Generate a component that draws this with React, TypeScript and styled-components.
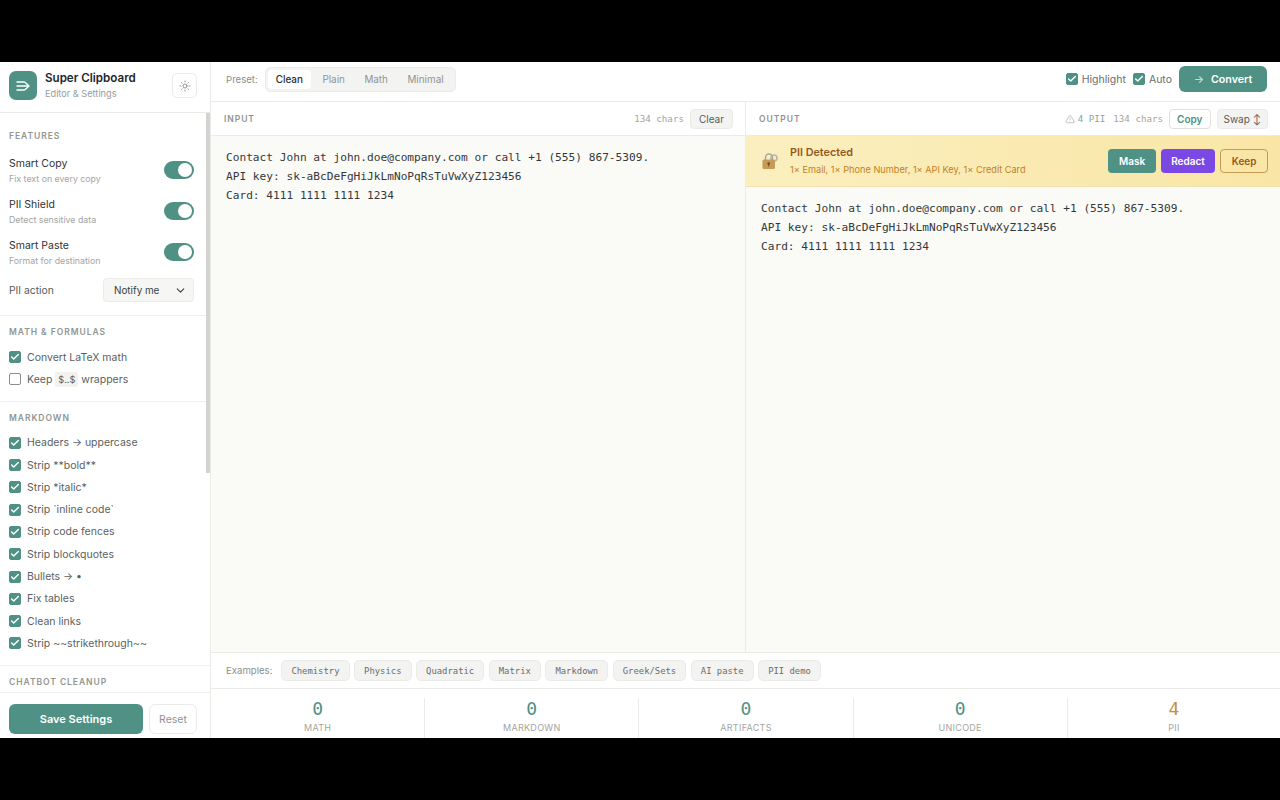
import React from 'react'
import styled, { createGlobalStyle } from 'styled-components'
import { ChevronDown, Sun, TriangleAlert, Check } from 'lucide-react'

const Global = createGlobalStyle`
  html, body { margin: 0; padding: 0; background: #000; }
  * { box-sizing: border-box; }
  body { font-family: Inter, "Liberation Sans", sans-serif; }
`

const sans = `Inter, "Liberation Sans", sans-serif`
const mono = `"DejaVu Sans Mono", "Liberation Mono", monospace`
const teal = '#4f9184'

const markdownOptions = [
  'Headers → uppercase',
  'Strip **bold**',
  'Strip *italic*',
  'Strip `inline code`',
  'Strip code fences',
  'Strip blockquotes',
  'Bullets → •',
  'Fix tables',
  'Clean links',
  'Strip ~~strikethrough~~',
]
const features = [
  { title: 'Smart Copy', sub: 'Fix text on every copy' },
  { title: 'PII Shield', sub: 'Detect sensitive data' },
  { title: 'Smart Paste', sub: 'Format for destination' },
]
const examples = ['Chemistry', 'Physics', 'Quadratic', 'Matrix', 'Markdown', 'Greek/Sets', 'AI paste', 'PII demo']
const stats = [
  { value: 0, label: 'MATH' },
  { value: 0, label: 'MARKDOWN' },
  { value: 0, label: 'ARTIFACTS' },
  { value: 0, label: 'UNICODE' },
  { value: 4, label: 'PII', warn: true },
]

const sample = `Contact John at john.doe@company.com or call +1 (555) 867-5309.
API key: sk-aBcDeFgHiJkLmNoPqRsTuVwXyZ123456
Card: 4111 1111 1111 1234`

const Box = ({ on = true, }: { on?: boolean }) => (
  <CheckBox $on={on}>{on ? <Check size={10} strokeWidth={3.5} color="#fff" /> : null}</CheckBox>
)

export default function App() {
  return (
    <Page>
      <Global />
      <Frame>
        <Sidebar>
          <SideHead>
            <Logo>
              <svg width="14" height="10" viewBox="0 0 14 10" fill="none" stroke="#fff" strokeWidth="1.4" strokeLinecap="round" strokeLinejoin="round">
                <path d="M1 1h7.5M1 5h11.5M1 9h7.5M9.5 1.8L13 5 9.5 8.2" />
              </svg>
            </Logo>
            <Brand>
              <BrandName>Super Clipboard</BrandName>
              <BrandSub>Editor &amp; Settings</BrandSub>
            </Brand>
            <ThemeButton><Sun size={12} strokeWidth={1.4} /></ThemeButton>
          </SideHead>
          <SideScroll>
            <Section $pad={17} $tail={13}>
              <SectionTitle>FEATURES</SectionTitle>
              <FeatureList>
                {features.map((f) => (
                  <Feature key={f.title}>
                    <div>
                      <FeatureTitle>{f.title}</FeatureTitle>
                      <FeatureSub>{f.sub}</FeatureSub>
                    </div>
                    <Toggle />
                  </Feature>
                ))}
              </FeatureList>
              <ActionRow>
                <ActionLabel>PII action</ActionLabel>
                <Select>Notify me<ChevronDown size={13} strokeWidth={2} /></Select>
              </ActionRow>
            </Section>
            <Section $pad={10} $tail={10}>
              <SectionTitle>MATH &amp; FORMULAS</SectionTitle>
              <OptionList $top={8}>
                <Option><Box />Convert LaTeX math</Option>
                <Option><Box on={false} /><span>Keep <Code>$..$</Code> wrappers</span></Option>
              </OptionList>
            </Section>
            <Section $pad={10} $tail={10}>
              <SectionTitle>MARKDOWN</SectionTitle>
              <OptionList $top={8}>
                {markdownOptions.map((o) => (
                  <Option key={o}><Box />{o}</Option>
                ))}
              </OptionList>
            </Section>
            <Section $pad={10}>
              <SectionTitle>CHATBOT CLEANUP</SectionTitle>
            </Section>
            <Thumb />
          </SideScroll>
          <SideFoot>
            <SaveButton>Save Settings</SaveButton>
            <ResetButton>Reset</ResetButton>
          </SideFoot>
        </Sidebar>
        <Main>
          <TopBar>
            <PresetLabel>Preset:</PresetLabel>
            <PresetGroup>
              <PresetItem $active>Clean</PresetItem>
              <PresetItem>Plain</PresetItem>
              <PresetItem>Math</PresetItem>
              <PresetItem>Minimal</PresetItem>
            </PresetGroup>
            <TopRight>
              <TopCheck><Box />Highlight</TopCheck>
              <TopCheck><Box />Auto</TopCheck>
              <ConvertButton><span>→</span>Convert</ConvertButton>
            </TopRight>
          </TopBar>
          <Panels>
            <Panel>
              <PanelHead>
                <PanelTitle>INPUT</PanelTitle>
                <PanelTools>
                  <CharCount>134 chars</CharCount>
                  <GreyButton>Clear</GreyButton>
                </PanelTools>
              </PanelHead>
              <TextArea>{sample}</TextArea>
            </Panel>
            <Panel>
              <PanelHead>
                <PanelTitle>OUTPUT</PanelTitle>
                <PanelTools>
                  <PiiCount><TriangleAlert size={10} strokeWidth={1.5} />4 PII</PiiCount>
                  <CharCount>134 chars</CharCount>
                  <CopyButton>Copy</CopyButton>
                  <SwapButton>Swap ↕</SwapButton>
                </PanelTools>
              </PanelHead>
              <Banner>
                <LockIcon viewBox="0 0 18 18" width="18" height="18">
                  <circle cx="13" cy="6" r="3" fill="none" stroke="#b9b7ae" strokeWidth="1.7" />
                  <path d="M11 8l-3 4" stroke="#b9b7ae" strokeWidth="1.7" />
                  <path d="M4.5 8V5.5a3.5 3.5 0 0 1 7 0V8" fill="none" stroke="#a8a69c" strokeWidth="1.5" />
                  <rect x="1.5" y="7.5" width="12.5" height="9.5" rx="1.5" fill="#c89a58" />
                  <circle cx="7.7" cy="11.5" r="1.3" fill="#6e4e22" />
                  <rect x="7.2" y="11.5" width="1" height="3" fill="#6e4e22" />
                </LockIcon>
                <BannerText>
                  <BannerTitle>PII Detected</BannerTitle>
                  <BannerSub>1× Email, 1× Phone Number, 1× API Key, 1× Credit Card</BannerSub>
                </BannerText>
                <BannerActions>
                  <ActionButton $bg={teal}>Mask</ActionButton>
                  <ActionButton $bg="#7c48e4">Redact</ActionButton>
                  <KeepButton>Keep</KeepButton>
                </BannerActions>
              </Banner>
              <TextArea>{sample}</TextArea>
            </Panel>
          </Panels>
          <ExampleBar>
            <ExampleLabel>Examples:</ExampleLabel>
            {examples.map((e) => <Chip key={e}>{e}</Chip>)}
          </ExampleBar>
          <StatBar>
            {stats.map((s) => (
              <Stat key={s.label}>
                <StatValue $warn={s.warn}>{s.value}</StatValue>
                <StatLabel>{s.label}</StatLabel>
              </Stat>
            ))}
          </StatBar>
        </Main>
      </Frame>
    </Page>
  )
}

const Page = styled.div`
  width: 1280px;
  height: 800px;
  padding-top: 62px;
  overflow: hidden;
  background: #000;
`
const Frame = styled.div`
  width: 1280px;
  height: 676px;
  display: flex;
  background: #fff;
  font-family: ${sans};
  overflow: hidden;
`
const Sidebar = styled.aside`
  width: 211px;
  flex-shrink: 0;
  display: flex;
  flex-direction: column;
  border-right: 1px solid #ebebe8;
`
const SideHead = styled.div`
  height: 51px;
  flex-shrink: 0;
  display: flex;
  align-items: center;
  padding: 0 13px 3px 9px;
  gap: 8px;
  border-bottom: 1px solid #ebebe8;
`
const Logo = styled.div`
  width: 28px;
  height: 29px;
  border-radius: 7px;
  background: ${teal};
  display: flex;
  align-items: center;
  justify-content: center;
`
const Brand = styled.div`
  flex: 1;
  display: flex;
  flex-direction: column;
  gap: 2px;
`
const BrandName = styled.div`
  font-size: 11.6px;
  font-weight: 600;
  line-height: 15px;
  color: #22262a;
`
const BrandSub = styled.div`
  font-size: 9.2px;
  line-height: 12px;
  color: #999c9a;
`
const ThemeButton = styled.div`
  width: 25px;
  height: 25px;
  border: 1px solid #ebebe8;
  border-radius: 5px;
  display: flex;
  align-items: center;
  justify-content: center;
  color: #6c6f6d;
`
const SideScroll = styled.div`
  flex: 1;
  min-height: 0;
  overflow: hidden;
  position: relative;
`
const Thumb = styled.div`
  position: absolute;
  top: 0;
  right: 0;
  width: 4px;
  height: 360px;
  background: #d3d3d0;
`
const Section = styled.section<{ $pad: number; $tail?: number }>`
  padding: ${(p) => p.$pad}px 16px ${(p) => p.$tail ?? 12}px 9px;
  border-bottom: 1px solid #efefec;
`
const SectionTitle = styled.div`
  font-size: 8.5px;
  font-weight: 600;
  letter-spacing: 0.95px;
  line-height: 12px;
  color: #929592;
`
const FeatureList = styled.div`
  margin-top: 13px;
  display: flex;
  flex-direction: column;
  gap: 11px;
`
const Feature = styled.div`
  display: flex;
  align-items: center;
  justify-content: space-between;
  height: 30px;
`
const FeatureTitle = styled.div`
  font-size: 10.5px;
  font-weight: 400;
  line-height: 15px;
  color: #2f3335;
`
const FeatureSub = styled.div`
  font-size: 8.8px;
  line-height: 13px;
  margin-top: 1px;
  color: #a3a5a3;
`
const Toggle = styled.div`
  width: 30px;
  height: 18px;
  border-radius: 9px;
  background: ${teal};
  position: relative;
  &::after {
    content: '';
    position: absolute;
    top: 2px;
    right: 2px;
    width: 14px;
    height: 14px;
    border-radius: 50%;
    background: #fff;
  }
`
const ActionRow = styled.div`
  margin-top: 11px;
  display: flex;
  align-items: center;
  justify-content: space-between;
`
const ActionLabel = styled.div`
  font-size: 10.3px;
  color: #55595a;
`
const Select = styled.div`
  width: 91px;
  height: 24px;
  border: 1px solid #ebebe8;
  border-radius: 4px;
  background: #f6f6f4;
  display: flex;
  align-items: center;
  justify-content: space-between;
  padding: 0 6px 0 10px;
  font-size: 9.9px;
  color: #3b3f40;
`
const OptionList = styled.div<{ $top: number }>`
  margin-top: ${(p) => p.$top}px;
  display: flex;
  flex-direction: column;
`
const Option = styled.div`
  height: 22.3px;
  display: flex;
  align-items: center;
  gap: 6px;
  font-size: 10.5px;
  color: #5b5f60;
  white-space: nowrap;
`
const CheckBox = styled.span<{ $on: boolean }>`
  width: 12px;
  height: 12px;
  flex-shrink: 0;
  border-radius: 2px;
  display: inline-flex;
  align-items: center;
  justify-content: center;
  background: ${(p) => (p.$on ? teal : '#fff')};
  border: 1px solid ${(p) => (p.$on ? teal : '#8c8e8c')};
`
const Code = styled.code`
  font-family: ${sans};
  font-size: 9.2px;
  background: #f2f2ef;
  border-radius: 2px;
  padding: 2px 3px;
  color: #5b5f60;
`
const SideFoot = styled.div`
  height: 46px;
  flex-shrink: 0;
  display: flex;
  gap: 6px;
  padding: 11px 13px 4px 9px;
  border-top: 1px solid #efefec;
`
const SaveButton = styled.div`
  width: 134px;
  border-radius: 6px;
  background: ${teal};
  color: #fff;
  font-size: 11px;
  font-weight: 600;
  display: flex;
  align-items: center;
  justify-content: center;
`
const ResetButton = styled.div`
  flex: 1;
  border: 1px solid #ebebe8;
  border-radius: 6px;
  color: #8f9290;
  font-size: 10.5px;
  display: flex;
  align-items: center;
  justify-content: center;
`
const Main = styled.main`
  flex: 1;
  min-width: 0;
  display: flex;
  flex-direction: column;
`
const TopBar = styled.div`
  height: 40px;
  flex-shrink: 0;
  display: flex;
  align-items: center;
  padding: 0 13px 5px 15px;
  border-bottom: 1px solid #ebebe8;
`
const PresetLabel = styled.span`
  font-size: 9.6px;
  color: #8c8f8d;
`
const ExampleLabel = styled(PresetLabel)`
  margin-right: 4.4px;
`
const PresetGroup = styled.div`
  margin-left: 7px;
  height: 25px;
  width: 191px;
  padding: 2px;
  display: flex;
  border: 1px solid #ebebe8;
  border-radius: 5px;
  background: #f3f3f1;
`
const PresetItem = styled.div<{ $active?: boolean }>`
  padding: 0 8px;
  display: flex;
  align-items: center;
  font-size: 9.9px;
  border-radius: 4px;
  font-weight: ${(p) => (p.$active ? 500 : 400)};
  color: ${(p) => (p.$active ? '#2a2d2f' : '#909391')};
  background: ${(p) => (p.$active ? '#fff' : 'transparent')};
  & + & { margin-left: 3.5px; }
`
const TopRight = styled.div`
  margin-left: auto;
  display: flex;
  align-items: center;
`
const TopCheck = styled.div`
  display: flex;
  align-items: center;
  gap: 4px;
  margin-right: 7px;
  font-size: 10.5px;
  color: #696d6d;
`
const ConvertButton = styled.div`
  width: 88px;
  height: 26px;
  border-radius: 6px;
  background: ${teal};
  color: #fff;
  display: flex;
  align-items: center;
  justify-content: center;
  gap: 7px;
  font-size: 10.7px;
  font-weight: 600;
  span { font-weight: 400; opacity: 0.8; }
`
const Panels = styled.div`
  flex: 1;
  min-height: 0;
  display: grid;
  grid-template-columns: 535px 1fr;
  border-bottom: 1px solid #ebebe8;
`
const Panel = styled.div`
  display: flex;
  flex-direction: column;
  min-height: 0;
  background: #fafaf7;
  &:first-child { border-right: 1px solid #ebebe8; }
`
const PanelHead = styled.div`
  height: 34px;
  flex-shrink: 0;
  background: #fff;
  display: flex;
  align-items: center;
  justify-content: space-between;
  padding: 0 12px 0 13px;
  border-bottom: 1px solid #ebebe8;
`
const PanelTitle = styled.div`
  font-size: 8.5px;
  font-weight: 600;
  letter-spacing: 0.95px;
  color: #8f9290;
`
const PanelTools = styled.div`
  display: flex;
  align-items: center;
  gap: 6px;
`
const CharCount = styled.span`
  font-family: ${mono};
  font-size: 9.2px;
  color: #a3a5a3;
`
const PiiCount = styled.span`
  font-family: ${mono};
  font-size: 9.2px;
  color: #7eaaa1;
  display: inline-flex;
  align-items: center;
  gap: 3px;
  margin-right: 2px;
  svg { color: #a3a5a3; }
`
const GreyButton = styled.div`
  height: 20px;
  padding: 0 8px;
  border: 1px solid #ebebe8;
  border-radius: 4px;
  background: #f3f3f1;
  color: #585c5d;
  font-size: 10px;
  display: flex;
  align-items: center;
`
const CopyButton = styled(GreyButton)`
  padding: 0 7px;
  background: #fff;
  border-color: #dfdfdc;
  color: ${teal};
  font-weight: 600;
`
const SwapButton = styled(GreyButton)`
  padding: 0 6px;
`
const TextArea = styled.pre`
  margin: 0;
  flex: 1;
  padding: 12px 15px;
  font-family: ${mono};
  font-size: 11.16px;
  line-height: 19px;
  color: #34383a;
`
const Banner = styled.div`
  height: 51px;
  flex-shrink: 0;
  display: flex;
  align-items: center;
  padding: 0 12px 0 15px;
  background: linear-gradient(90deg, #fbefbf, #f9e6a6);
  border-bottom: 1px solid #f2e3ae;
`
const LockIcon = styled.svg`
  flex-shrink: 0;
`
const BannerText = styled.div`
  margin-left: 11px;
  flex: 1;
`
const BannerTitle = styled.div`
  font-size: 10.8px;
  font-weight: 600;
  line-height: 14px;
  color: #96591c;
`
const BannerSub = styled.div`
  margin-top: 3px;
  font-size: 9.2px;
  line-height: 13px;
  color: #c4801f;
`
const BannerActions = styled.div`
  display: flex;
  gap: 5px;
`
const ActionButton = styled.div<{ $bg: string }>`
  height: 24px;
  padding: 0 10.5px;
  border-radius: 4px;
  background: ${(p) => p.$bg};
  color: #fff;
  font-size: 10px;
  font-weight: 600;
  display: flex;
  align-items: center;
`
const KeepButton = styled(ActionButton).attrs({ $bg: 'transparent' })`
  border: 1px solid #c59a54;
  color: #96591c;
`
const ExampleBar = styled.div`
  height: 36px;
  flex-shrink: 0;
  display: flex;
  align-items: center;
  gap: 4.6px;
  padding: 0 15px;
  border-bottom: 1px solid #ebebe8;
`
const Chip = styled.div`
  height: 21px;
  padding: 0 9px;
  border: 1px solid #ebebe8;
  border-radius: 5px;
  background: #f3f3f1;
  font-family: ${mono};
  font-size: 8.9px;
  color: #696d6d;
  display: flex;
  align-items: center;
`
const StatBar = styled.div`
  height: 49px;
  flex-shrink: 0;
  display: grid;
  grid-template-columns: repeat(4, 214.2px) 1fr;
  padding-top: 9px;
`
const Stat = styled.div`
  display: flex;
  flex-direction: column;
  align-items: center;
  &:not(:last-child) { border-right: 1px solid #ebebe8; }
`
const StatValue = styled.div<{ $warn?: boolean }>`
  font-family: ${mono};
  font-size: 18px;
  line-height: 22px;
  color: ${(p) => (p.$warn ? '#c4913f' : teal)};
`
const StatLabel = styled.div`
  font-size: 9px;
  line-height: 12px;
  margin-top: 2px;
  letter-spacing: 0.3px;
  color: #a3a5a3;
`
